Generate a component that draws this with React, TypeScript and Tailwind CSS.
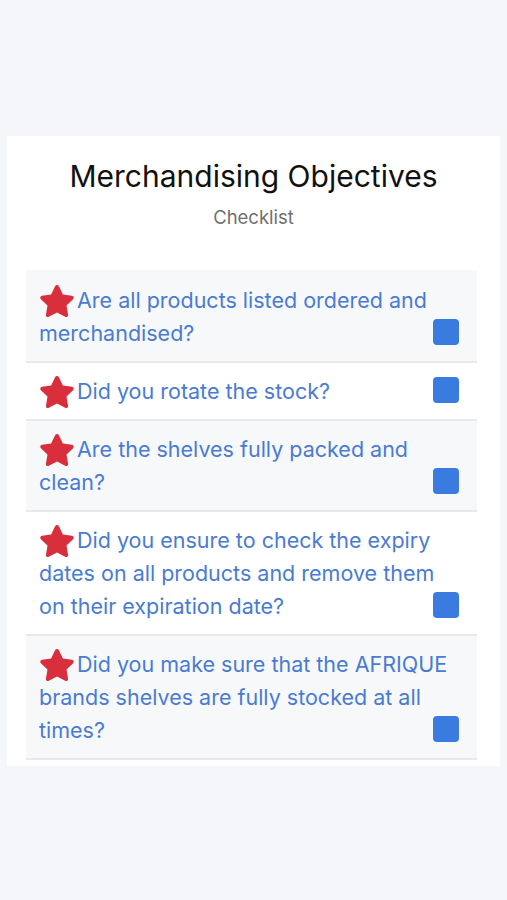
import React from "react";
import { FaStar } from "react-icons/fa";

const questions = [
  "Are all products listed ordered and merchandised?",
  "Did you rotate the stock?",
  "Are the shelves fully packed and clean?",
  "Did you ensure to check the expiry dates on all products and remove them on their expiration date?",
  "Did you make sure that the AFRIQUE brands shelves are fully stocked at all times?",
];

const App = () => {
  return (
    <div
      className="min-h-screen w-full bg-[#f4f6fa] pt-[136px]"
      style={{ fontFamily: "Inter, 'Noto Sans', sans-serif" }}
    >
      <div className="mx-[7px] bg-white pb-[6px]">
        <div className="flex flex-col items-center pt-[20px] pb-[40px]">
          <h1 className="text-[30px] leading-[40px] text-[#111111]">Merchandising Objectives</h1>
          <span className="mt-[8px] text-[18.5px] leading-[26px] text-[#6f6f6f]">Checklist</span>
        </div>
        <div className="ml-[19px] mr-[23px]">
          {questions.map((q, i) => (
            <div
              key={i}
              className={`relative border-b-2 border-[#e8e9eb] pb-[11px] pl-[13px] pr-[16px] ${
                i === 0 ? "pt-[14px]" : "pt-3"
              } ${i % 2 === 0 ? "bg-[#f7f8fa]" : "bg-white"}`}
            >
              <p className="text-[21.5px] leading-[33px] text-[#4a7bd2]">
                <FaStar
                  size={36}
                  className="-mt-[8px] -mb-[4px] mr-[2px] inline-block align-[-7px] text-[#d92f3d]"
                />
                {q}
              </p>
              <div className="absolute right-[18px] bottom-[16px] h-[26px] w-[26px] rounded-[4px] bg-[#3a7be0]" />
            </div>
          ))}
        </div>
      </div>
    </div>
  );
};

export default App;
